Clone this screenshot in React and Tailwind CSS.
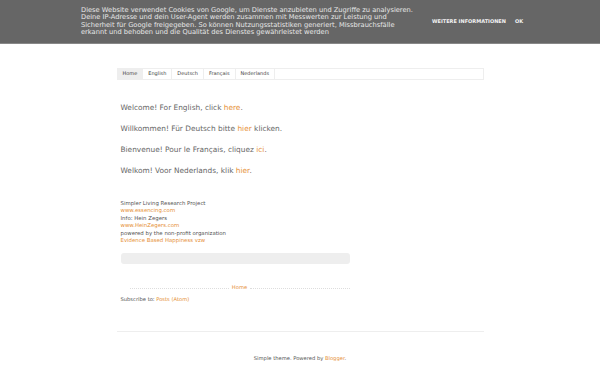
export default function App() {
  const tabs = ['Home', 'English', 'Deutsch', 'Français', 'Nederlands'];
  return (
    <div className="min-h-[375px] bg-white text-[#666] font-['DejaVu_Sans',sans-serif]">
      <div className="h-[44px] bg-[#666] border-b border-[#888] flex items-center">
        <div className="ml-[81px] w-[345px] text-[6.7px] leading-[7.2px] text-[#e6e6e6] whitespace-nowrap">
          Diese Website verwendet Cookies von Google, um Dienste anzubieten und Zugriffe zu analysieren.<br />
          Deine IP-Adresse und dein User-Agent werden zusammen mit Messwerten zur Leistung und<br />
          Sicherheit für Google freigegeben. So können Nutzungsstatistiken generiert, Missbrauchsfälle<br />
          erkannt und behoben und die Qualität des Dienstes gewährleistet werden
        </div>
        <div className="ml-[6px] flex gap-[9px] text-[5px] font-bold text-[#f2f2f2]">
          <span>WEITERE INFORMATIONEN</span>
          <span>OK</span>
        </div>
      </div>

      <div className="w-[367px] mx-auto mt-[24px]">
        <div className="flex h-[12px] border border-[#eee] text-[5px] text-[#444]">
          {tabs.map((t, i) => (
            <div key={t} className={`px-[5px] flex items-center border-r border-[#eee] ${i === 0 ? 'bg-[#eee]' : ''}`}>{t}</div>
          ))}
        </div>

        <div className="px-[4px] pt-[24px] text-[7.4px] leading-[8px] space-y-[13px]">
          <p>Welcome! For English, click <span className="text-[#e69138]">here</span>.</p>
          <p>Willkommen! Für Deutsch bitte <span className="text-[#e69138]">hier</span> klicken.</p>
          <p>Bienvenue! Pour le Français, cliquez <span className="text-[#e69138]">ici</span>.</p>
          <p>Welkom! Voor Nederlands, klik <span className="text-[#e69138]">hier</span>.</p>
        </div>

        <div className="px-[4px] pt-[25px] text-[5.4px] leading-[7.4px] text-[#555]">
          <div>Simpler Living Research Project</div>
          <div className="text-[#e69138]">www.essencing.com</div>
          <div>Info: Hein Zegers</div>
          <div className="text-[#e69138]">www.HeinZegers.com</div>
          <div>powered by the non-profit organization</div>
          <div className="text-[#e69138]">Evidence Based Happiness vzw</div>
        </div>

        <div className="ml-[4px] mt-[9px] w-[229px] h-[11px] rounded-[3px] bg-[#eee]"></div>

        <div className="ml-[13px] mt-[20px] w-[220px] flex items-center gap-[3px] text-[5.2px]">
          <div className="flex-1 border-t border-dotted border-[#ddd]"></div>
          <span className="text-[#e69138]">Home</span>
          <div className="flex-1 border-t border-dotted border-[#ddd]"></div>
        </div>

        <div className="px-[4px] mt-[4px] text-[5.2px] text-[#555]">
          Subscribe to: <span className="text-[#e69138]">Posts (Atom)</span>
        </div>

        <div className="mt-[27px] border-t border-[#eee]"></div>

        <div className="mt-[23px] pb-[10px] text-center text-[5.2px] text-[#555]">
          Simple theme. Powered by <span className="text-[#e69138]">Blogger</span>.
        </div>
      </div>
    </div>
  );
}
